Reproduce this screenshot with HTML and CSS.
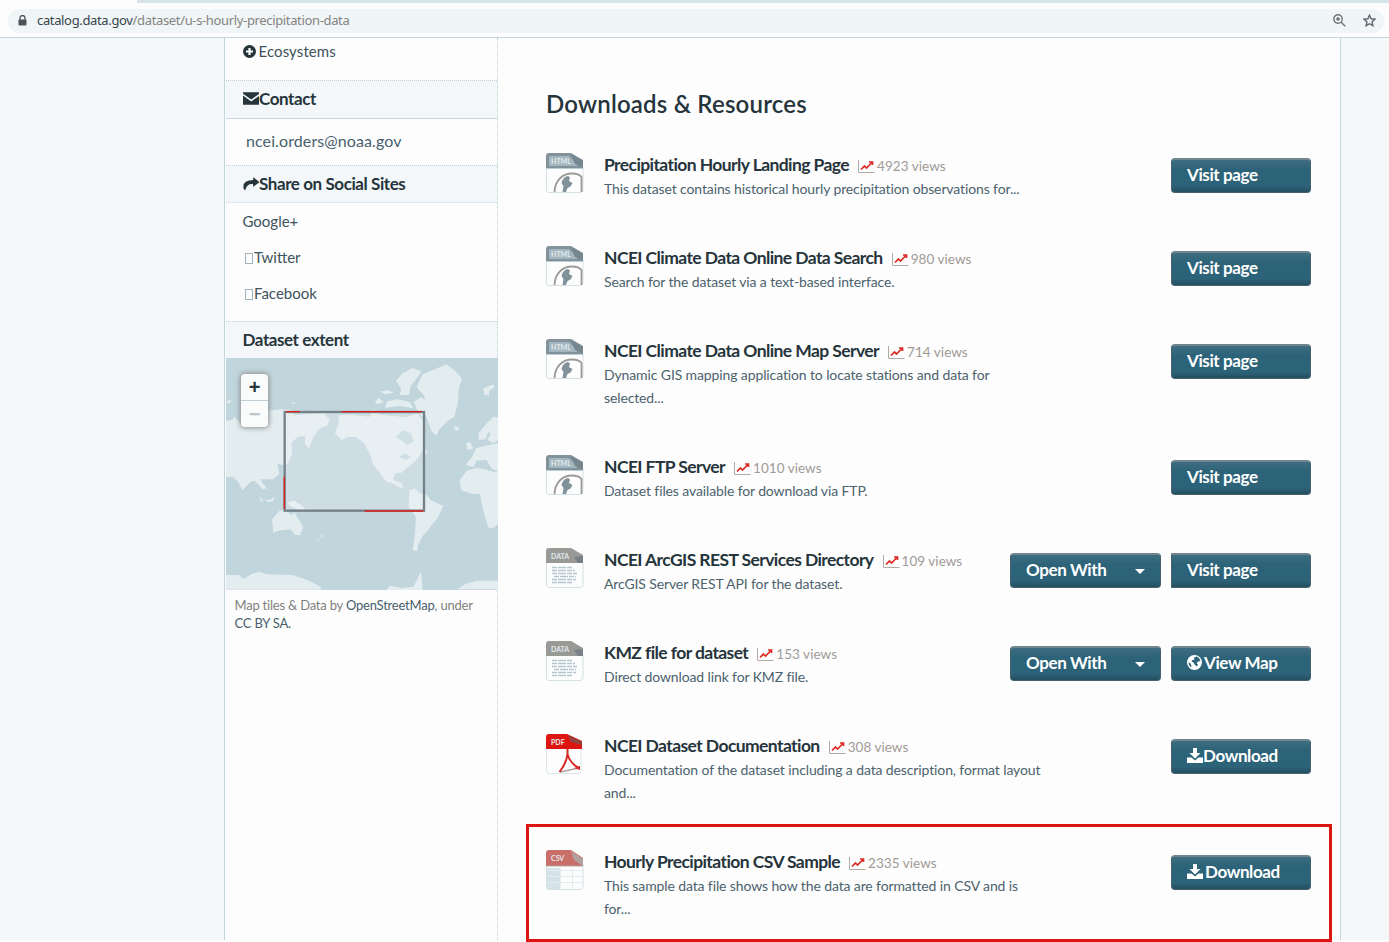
FILE: index.html
```
<!DOCTYPE html>
<html lang="en">
<head>
<meta charset="utf-8">
<title>U.S. Hourly Precipitation Data</title>
<link rel="stylesheet" href="styles.css">
</head>
<body>
<svg class="defs" width="0" height="0" aria-hidden="true">
  <symbol id="chart" viewBox="0 0 17 14"><path d="M.5 0v12.500H16.500" fill="none" stroke="#b4aaa4"/><path d="M3 9.500 6.500 6l2 2L14 2.500M11 2h3.500v3" fill="none" stroke="#dc2a24" stroke-width="1.700"/></symbol>
  <symbol id="file-html" viewBox="0 0 38 40">
    <path d="M.5 14V37q0 2.500 2.500 2.500H34q3 0 3-3V14z" fill="#fdfdfd" stroke="#d3e0e5"/>
    <path d="M0 16V3q0-3 3-3h22l12 7v9z" fill="#82929b"/><path d="M3 13V3h20l8 8v2z" fill="#a3b6bf"/><path d="M25 1l12 7v6l-8-3z" fill="#76868e"/><path d="M0 15.500h37" stroke="#b9cdd5"/>
    <path d="M8.500 39C9 27 17 20.500 26 20.500q7 0 9.500 3.500v15" fill="none" stroke="#9c9a99" stroke-width="1.800"/>
    <path d="M16.500 27q2-3.500 5.500-4l2 1.500-1 3.500 3.500 2-2 3.500-3 1.500-1.500 4h-3.500l1-6-2-3z" fill="#81929b"/>
  </symbol>
  <symbol id="file-data" viewBox="0 0 38 40">
    <path d="M.5 14V37q0 2.500 2.500 2.500H34q3 0 3-3V14z" fill="#fdfdfd" stroke="#d3e0e5"/>
    <path d="M0 15V3q0-3 3-3h22l12 7v8z" fill="#999996"/><path d="M28 9l9-1v7h-5z" fill="#758087"/>
    <path d="M6 19.500h20M6 22.500h23M6 25.500h25M8 28.500h22M6 31.500h24M6 34.500h21" stroke="#b4c7cf" stroke-width="1.600" stroke-dasharray="5 1 8 1"/>
  </symbol>
  <symbol id="file-pdf" viewBox="0 0 38 40">
    <path d="M.5 14V37q0 2.500 2.500 2.500H32q3 0 3-3V14z" fill="#fdfdfd" stroke="#dce7eb"/>
    <path d="M0 15V3q0-3 3-3h18l15 7v8z" fill="#dd1611"/><path d="M22 1l14 7v3l-11-3z" fill="#8e4440"/>
    <path d="M14 38l19-4" stroke="#aaa29d" stroke-width="1.500"/><path d="M21.500 15v5q2 9 12 14.500M21.500 20q-1 9-8 18" fill="none" stroke="#d92822" stroke-width="2"/><path d="M28 34l6-2v4z" fill="#d92822"/>
  </symbol>
  <symbol id="file-csv" viewBox="0 0 38 40">
    <path d="M.5 14V37q0 2.500 2.500 2.500H34q3 0 3-3V14z" fill="#fdfdfd" stroke="#d3e0e5"/>
    <path d="M0 16V3q0-3 3-3h22l12 8v8z" fill="#c96e69"/><path d="M25 1l12 8v7l-9-6z" fill="#b1a29d"/><path d="M0 16h37" stroke="#b3aaa6"/>
    <path d="M1 18h13v21H3q-2 0-2-2z" fill="#d5e2e7"/><path d="M1 20.500h36M1 26.500h36M1 32.500h36M14.500 18v21M26.500 18v21" stroke="#e4edf0"/>
  </symbol>
  <symbol id="download" viewBox="0 0 16 15"><path d="M6 0h4v5h3.500L8 10.500 2.500 5H6z"/><path d="M0 9.500h4.500L8 12.500l3.500-3H16V15H0z"/></symbol>
  <symbol id="globe" viewBox="0 0 15 15"><circle cx="7.500" cy="7.500" r="7.500"/><path d="M7 2.500l2.500-1 2.500 1.500 1.500 3-2.500.5-1.500 2 1.500 1-1 2-2.500-2-1-2-2-1 1-1.500 2-.5zM1.500 7l2 1.500 1 2.500-.5 1.500q-2.500-2-2.500-5.500z" fill="#2c6379"/></symbol>
</svg>

<header class="browser">
  <div class="tabstrip"></div>
  <div class="omnibox">
    <svg class="lock" viewBox="0 0 9 11"><path d="M2 5V3a2.500 2.500 0 0 1 5 0v2" fill="none" stroke="#4a5358" stroke-width="1.300"/><rect x=".5" y="4.500" width="8" height="6" rx="1" fill="#4a5358"/></svg>
    <span class="url"><b>catalog.data.gov</b>/dataset/u-s-hourly-precipitation-data</span>
    <svg class="magnify" viewBox="0 0 13 13"><circle cx="5" cy="5" r="4.200" fill="none" stroke="#6f7477" stroke-width="1.400"/><path d="M8 8l4.200 4.200M3 5h4M5 3v4" stroke="#6f7477" stroke-width="1.400"/></svg>
    <svg class="star" viewBox="0 0 13 13"><path d="M6.500 1.200l1.600 3.600 3.900.4-2.900 2.600.8 3.900-3.400-2-3.400 2 .8-3.900L1 5.200l3.900-.4z" fill="none" stroke="#5d686e" stroke-width="1.400"/></svg>
  </div>
</header>

<div class="page">
  <aside class="sidebar">
    <div class="topic">
      <svg class="plus" viewBox="0 0 13 13"><circle cx="6.500" cy="6.500" r="6.500" fill="#26343b"/><path d="M6.500 3v7M3 6.500h7" stroke="#fff" stroke-width="2.200"/></svg>
      <span>Ecosystems</span>
    </div>
    <h2 class="heading contact">
      <svg width="17" height="13" viewBox="0 0 17 13"><path d="M0 0h17v1.500L8.500 7.500 0 1.500z"/><path d="M0 3.500 8.500 9.500 17 3.500V13H0z"/></svg><span>Contact</span>
    </h2>
    <div class="email">ncei.orders@noaa.gov</div>
    <h2 class="heading share">
      <svg width="17" height="13" viewBox="0 0 17 13"><path d="M10.500 0 17 5l-6.500 5V7.200Q4 6.500 2.500 13H1Q-2 3 10.500 2.800z"/></svg><span>Share on Social Sites</span>
    </h2>
    <ul class="social">
      <li>Google+</li>
      <li><i class="tofu"></i>Twitter</li>
      <li><i class="tofu"></i>Facebook</li>
    </ul>
    <h2 class="heading extent"><span>Dataset extent</span></h2>
    <div class="map">
      <svg width="272" height="232" viewBox="18 114 816 696">
        <rect x="18" y="114" width="816" height="696" fill="#c1d5dd"/>
        <g fill="#e3ecef">
          <path d="M18 302 35 300 44 290 70 318 125 322 145 298 143 272 180 268 215 270 222 285 310 280 330 300 320 318 300 325 280 350 266 388 254 370 256 348 234 350 214 368 216 400 205 430 190 436 172 430 178 462 160 478 120 478 140 505 128 508 104 482 92 485 68 510 52 482 38 470 18 472z"/>
          <path d="M18 245l18-8-8 14zM214 246l16 4-12 3zM118 528l12 14-6 4zM134 537l16 3 14-12-4 16-16 2z"/>
          <path d="M356 286 390 284 450 290 456 268 480 284 560 292 590 280 616 310 612 385 590 420 565 440 545 458 525 460 520 480 546 490 550 506 535 500 515 488 500 486 480 460 460 435 450 402 432 370 410 352 385 350 365 360 345 340 355 312z"/>
          <path d="M465 245l12-12 14 14-20 6zM480 215l25-5 15 8-25 5zM500 245l30-8 40 10 10 18-40-7-45 5zM528 182l20-22 30-16 27 10-18 25-16 20-4 25-28 2 4-20zM582 245l22-14 18 16 8 25-25 16-15-20z"/>
          <path d="M590 200l18-37 30-12 42-18 28 22 18 22-10 30-2 43-12 42-18 10-25 25-10 20-15-15-12-35-10-20 2-50-16-15z"/>
          <path d="M702 320l16 2-4 10-10-2zM790 205l30-12 4 8-16 12-2 14-14-4zM616 385l7 12-8 8z"/>
          <path d="M568 510 585 506 600 520 620 524 632 540 670 558 655 590 640 610 622 632 608 648 594 675 592 694 578 690 584 650 588 592 566 560z"/>
          <path d="M202 548l20-6 22 14 14 14-26-2-22-10zM156 598l22-26 15-2 10 6 12 10 8-10 9 16 18 28-9 26-16-2-14-16-36 4-15 6zM304 641l4 3-3 10-3-4zM290 660l10-9-7 12z"/>
          <path d="M834 292 820 290 800 310 776 340 776 360 796 358 805 335 812 342 802 360 820 370 834 360zM738 370l12-4 10 20-18 4zM834 370l-30 6-35 8-12 25-20 25 24 8 8-20 30-2 16 26 26 10z"/>
          <path d="M740 452 770 444 792 448 820 455 834 454V612l-14 12-15-1-15-50-10-50-25-2-32-10-4-30z"/>
          <path d="M18 765h38l14 12 24-14 24-8 22 8 78 2 30 10 26 10 28 16v8H18zM510 798l35 6 35-4 14-26 9-20 5 56H500zM712 808l24-16 34-10h64v26z"/>
        </g>
        <path d="M526 350l25-20 22 10 8 24-20 12-16-15zM535 410l22-10 14 12-12 8z" fill="#c5d8df"/>
        <rect x="194" y="276" width="418" height="296" fill="#fff" fill-opacity=".2" stroke="#758188" stroke-width="7"/>
        <path d="M198 275H240M364 275H606M434 573H610M193 470V566" stroke="#dd1f1a" stroke-width="4"/>
      </svg>
      <div class="zoomer"><span>+</span><span class="off">−</span></div>
    </div>
    <p class="credit">Map tiles &amp; Data by <b>OpenStreetMap</b>, under<br><b>CC BY SA.</b></p>
  </aside>

  <main class="main">
    <h1>Downloads &amp; Resources</h1>
    <ul class="resources">
      <li class="row"><svg class="ficon"><use href="#file-html"/><text x="5" y="10.500" class="file-label">HTML</text></svg><div class="info"><h3><span>Precipitation Hourly Landing Page</span><svg class="trend"><use href="#chart"/></svg><small>4923 views</small></h3><p>This dataset contains historical hourly precipitation observations for...</p></div><div class="acts"><a class="btn">Visit page</a></div></li>
      <li class="row"><svg class="ficon"><use href="#file-html"/><text x="5" y="10.500" class="file-label">HTML</text></svg><div class="info"><h3><span>NCEI Climate Data Online Data Search</span><svg class="trend"><use href="#chart"/></svg><small>980 views</small></h3><p>Search for the dataset via a text-based interface.</p></div><div class="acts"><a class="btn">Visit page</a></div></li>
      <li class="row"><svg class="ficon"><use href="#file-html"/><text x="5" y="10.500" class="file-label">HTML</text></svg><div class="info"><h3><span>NCEI Climate Data Online Map Server</span><svg class="trend"><use href="#chart"/></svg><small>714 views</small></h3><p>Dynamic GIS mapping application to locate stations and data for<br>selected...</p></div><div class="acts"><a class="btn">Visit page</a></div></li>
      <li class="row"><svg class="ficon"><use href="#file-html"/><text x="5" y="10.500" class="file-label">HTML</text></svg><div class="info"><h3><span>NCEI FTP Server</span><svg class="trend"><use href="#chart"/></svg><small>1010 views</small></h3><p>Dataset files available for download via FTP.</p></div><div class="acts"><a class="btn">Visit page</a></div></li>
      <li class="row"><svg class="ficon"><use href="#file-data"/><text x="5" y="10.500" class="file-label">DATA</text></svg><div class="info"><h3><span>NCEI ArcGIS REST Services Directory</span><svg class="trend"><use href="#chart"/></svg><small>109 views</small></h3><p>ArcGIS Server REST API for the dataset.</p></div><div class="acts"><a class="btn open">Open With<i class="caret"></i></a><a class="btn square">Visit page</a></div></li>
      <li class="row"><svg class="ficon"><use href="#file-data"/><text x="5" y="10.500" class="file-label">DATA</text></svg><div class="info"><h3><span>KMZ file for dataset</span><svg class="trend"><use href="#chart"/></svg><small>153 views</small></h3><p>Direct download link for KMZ file.</p></div><div class="acts"><a class="btn open">Open With<i class="caret"></i></a><a class="btn spaced"><svg width="15" height="15"><use href="#globe"/></svg>View Map</a></div></li>
      <li class="row"><svg class="ficon"><use href="#file-pdf"/><text x="5" y="10.500" class="file-label">PDF</text></svg><div class="info"><h3><span>NCEI Dataset Documentation</span><svg class="trend"><use href="#chart"/></svg><small>308 views</small></h3><p>Documentation of the dataset including a data description, format layout<br>and...</p></div><div class="acts"><a class="btn"><svg width="16" height="15"><use href="#download"/></svg>Download</a></div></li>
      <li class="row marked"><svg class="ficon"><use href="#file-csv"/><text x="5" y="10.500" class="file-label">CSV</text></svg><div class="info"><h3><span>Hourly Precipitation CSV Sample</span><svg class="trend"><use href="#chart"/></svg><small>2335 views</small></h3><p>This sample data file shows how the data are formatted in CSV and is<br>for...</p></div><div class="acts"><a class="btn spaced"><svg width="16" height="15"><use href="#download"/></svg>Download</a></div></li>
    </ul>
  </main>
</div>
</body>
</html>
```
FILE: styles.css
```
* { box-sizing: border-box; }
body { margin: 0; height: 942px; overflow: hidden; background: #fdfdfd; font-family: Lato, "Open Sans", sans-serif; color: #26343b; }
h1, h2, h3, p, ul { margin: 0; padding: 0; }
ul { list-style: none; }
.defs { display: block; position: absolute; }

.browser { height: 38px; border-bottom: 1px solid #c1d5dd; }
.tabstrip { height: 3px; margin-left: 137px; background: #d7e4e9; }
.omnibox { display: flex; align-items: center; height: 24px; margin: 6px 5px 0 8px; padding: 0 8px 0 10px; border-radius: 12px; background: #f0f5f7; }
.lock { width: 9px; height: 11px; margin-top: -2px; }
.url { margin: -2px 0 0 10px; font: 13px/20px "Noto Sans", sans-serif; letter-spacing: -.35px; color: #858481; }
.url b { font-weight: 400; color: #36454c; }
.magnify { width: 13px; height: 13px; margin: -2px 0 0 auto; }
.star { width: 13px; height: 13px; margin: -2px 0 0 17px; }

.page { display: flex; height: 902px; background: #f4f8f9; }
.sidebar { width: 274px; margin-left: 224px; border-left: 1px solid #c1d5dd; border-right: 1px dotted #bcd0d8; background: #fdfdfd; flex: none; padding-left: 1px; }
.topic { display: flex; height: 42px; padding: 1px 0 0 16.5px; gap: 3px; font-size: 15px; line-height: 24px; letter-spacing: .1px; color: #40525b; }
.plus { width: 13px; height: 13px; margin-top: 6px; }
.heading { display: flex; align-items: center; height: 39px; padding: 0 0 2px 16.5px; border-top: 1px dotted #bcd0d8; border-bottom: 1px solid #c5d8df; background: #f3f7f9; font-size: 17px; font-weight: 700; letter-spacing: -.42px; }
.heading svg { width: 16.500px; fill: #26343b; }
.share { height: 38px; border-bottom-style: dotted; }
.extent { height: 37px; border-bottom: 0; }
.email { height: 46px; padding-left: 20px; font-size: 16px; line-height: 44px; letter-spacing: .1px; color: #48616d; }
.social { height: 118px; font-size: 15px; line-height: 36px; padding-left: 16.5px; color: #40525b; }
.tofu { display: inline-block; width: 8px; height: 11px; margin: 0 1.5px 0 2px; border: 1px solid #9fb4bd; vertical-align: -1px; }
.map { position: relative; height: 232px; width: 272px; overflow: hidden; }
.map > svg { display: block; }
.zoomer { position: absolute; left: 15px; top: 16px; width: 27px; height: 53px; background: #fafcfc; border-radius: 4px; box-shadow: 0 0 5px 1px #8d8f8f; font: bold 20px/27px "Liberation Sans", sans-serif; text-align: center; }
.zoomer span { display: block; height: 26px; }
.zoomer .off { color: #b9c5ca; border-top: 1px solid #c1d0d6; }
.credit { padding: 6px 0 0 8.5px; font-size: 13px; line-height: 18px; letter-spacing: -.21px; color: #81817e; }
.credit b { font-weight: 400; color: #48606c; }

.main { flex: none; width: 843px; padding: 50px 29px 0 48px; border-right: 1px solid #c1d5dd; background: #fdfdfd; }
h1 { height: 65px; font-size: 24px; line-height: 31px; font-weight: 600; letter-spacing: .2px; }
.row { position: relative; display: flex; padding-bottom: 46px; }
.ficon { flex: none; width: 38px; height: 40px; }
.file-label { font: bold 7px Lato, sans-serif; fill: #e2eaed; }
.info { margin-left: 20px; flex: 1; min-width: 0; white-space: nowrap; }
h3 { display: flex; align-items: center; height: 24px; font-size: 17.5px; line-height: 24px; font-weight: 700; letter-spacing: -.59px; }
.trend { flex: none; width: 17px; height: 14px; margin: 3px 2px 0 9px; }
h3 small { font-size: 13.5px; font-weight: 400; letter-spacing: .05px; color: #a09a96; padding-top: 2px; }
.info p { font-size: 14px; line-height: 23px; letter-spacing: -.12px; color: #4c626d; }
.acts { flex: none; display: flex; gap: 10px; margin-top: 5px; height: 34px; }
.btn { display: flex; align-items: center; width: 140px; height: 35px; padding: 0 15px 3px; border: 1px solid #45626f; border-top: 2px solid #71858e; border-radius: 4px; background: linear-gradient(#3e6d80, #2c6379 30%, #2c6379 80%, #254e60); color: #fff; font-size: 17px; font-weight: 700; letter-spacing: -.4px; white-space: nowrap; }
.btn svg { fill: #fff; }
.spaced { gap: 2px; }
.square { border-radius: 0 4px 4px 0; }
.open { width: 151px; justify-content: space-between; }
.caret { border: 5px solid transparent; border-top-color: #fff; border-bottom: 0; margin: 3px 0 0; }
.marked { padding-bottom: 0; }
.marked::after { content: ""; position: absolute; left: -20px; right: -21px; top: -26px; bottom: -22px; border: 3px solid #dd1611; }
```
